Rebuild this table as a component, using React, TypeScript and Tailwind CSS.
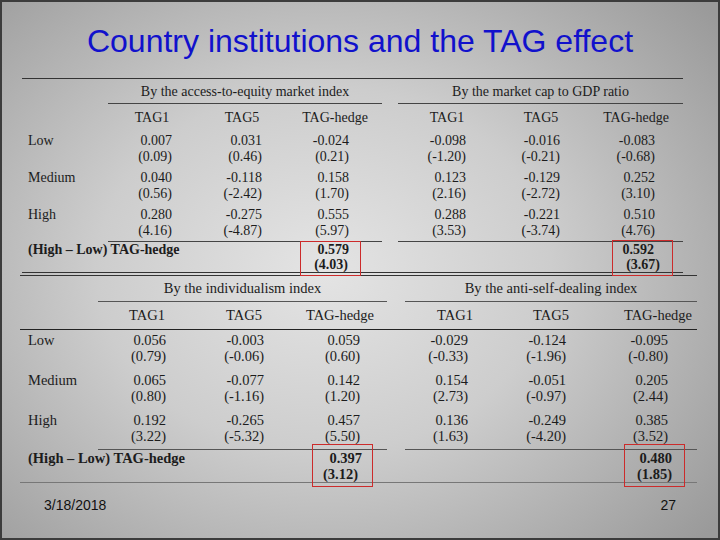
import React from "react";

type Cfg = {
  label: string;
  cols: string[];
  pr: string[];
  labelPad: string;
};

type Val = [string, string, string?, string?] | null;

const T1: Cfg = {
  label: "w-[90px]",
  labelPad: "pl-[6px]",
  cols: ["w-[80px]", "ml-[10px] w-[80px]", "ml-[13px] w-[80px]", "ml-[32px] w-[80px]", "ml-[14px] w-[80px]", "ml-[15px] w-[80px]"],
  pr: ["pr-[20px]", "pr-[20px]", "pr-[26px]", "pr-[21px]", "pr-[21px]", "pr-[21px]"],
};

const T2: Cfg = {
  label: "w-[87px]",
  labelPad: "pl-[8px]",
  cols: ["w-[80px]", "ml-[17px] w-[80px]", "ml-[16px] w-[80px]", "ml-[35px] w-[80px]", "ml-[16px] w-[80px]", "ml-[27px] w-[80px]"],
  pr: ["pr-[21px]", "pr-[20px]", "pr-[20px]", "pr-[27px]", "pr-[25px]", "pr-[30px]"],
};

const heads = ["TAG1", "TAG5", "TAG-hedge", "TAG1", "TAG5", "TAG-hedge"];

function HeadRow({ cfg, h }: { cfg: Cfg; h: string }) {
  return (
    <div className={`flex items-center ${h}`}>
      <div className={`${cfg.label} shrink-0`} />
      {heads.map((t, i) => (
        <div key={i} className={`${cfg.cols[i]} shrink-0 text-center whitespace-nowrap`}>
          {t}
        </div>
      ))}
    </div>
  );
}

function DataRow({
  cfg,
  label,
  vals,
  h,
  bold,
  lead,
}: {
  cfg: Cfg;
  label: string;
  vals: Val[];
  h: string;
  bold?: boolean;
  lead: string;
}) {
  return (
    <div className={`flex ${h} ${lead} ${bold ? "font-bold" : ""}`}>
      <div className={`${cfg.label} ${cfg.labelPad} shrink-0 whitespace-nowrap`}>{label}</div>
      {vals.map((v, i) => (
        <div key={i} className={`${cfg.cols[i]} ${cfg.pr[i]} shrink-0 text-right whitespace-nowrap`}>
          {v ? (
            <>
              <div className={v[2] ?? ""}>{v[0]}</div>
              <div className={v[3] ?? ""}>{v[1]}</div>
            </>
          ) : null}
        </div>
      ))}
    </div>
  );
}

export default function App() {
  return (
    <div className="relative w-[720px] h-[540px] overflow-hidden bg-[radial-gradient(ellipse_70%_75%_at_45%_50%,#e4e4e4_0%,#cdcdcd_45%,#9a9a9a_100%)] shadow-[inset_0_0_0_2px_#3c3c3c]">
      {/* Title */}
      <div className="h-[78px] pt-[23px] text-center font-['Liberation_Sans',Arial,sans-serif] text-[32px] leading-[36px] text-[#1111cc]">
        Country institutions and the TAG effect
      </div>

      <div className="font-['Liberation_Serif','Times_New_Roman',serif] text-[#1c1c1c]">
        {/* Table 1 */}
        <div className="ml-[22px] w-[661px] text-[14px]">
          <div className="h-px bg-[#333]" />
          <div className="flex h-[25px]">
            <div className="w-[86px] shrink-0" />
            <div className="w-[274px] shrink-0 border-b border-[#444] flex items-center justify-center whitespace-nowrap">
              By the access-to-equity market index
            </div>
            <div className="ml-[16px] w-[285px] shrink-0 border-b border-[#444] flex items-center justify-center whitespace-nowrap">
              By the market cap to GDP ratio
            </div>
          </div>
          <HeadRow cfg={T1} h="h-[26px]" />
          <DataRow cfg={T1} label="Low" h="h-[37px] pt-[3px]" lead="leading-[16px]" vals={[["0.007", "(0.09)"], ["0.031", "(0.46)"], ["-0.024", "(0.21)"], ["-0.098", "(-1.20)"], ["-0.016", "(-0.21)"], ["-0.083", "(-0.68)"]]} />
          <DataRow cfg={T1} label="Medium" h="h-[37px] pt-[3px]" lead="leading-[16px]" vals={[["0.040", "(0.56)"], ["-0.118", "(-2.42)"], ["0.158", "(1.70)"], ["0.123", "(2.16)"], ["-0.129", "(-2.72)"], ["0.252", "(3.10)"]]} />
          <DataRow cfg={T1} label="High" h="h-[37px] pt-[3px]" lead="leading-[16px]" vals={[["0.280", "(4.16)"], ["-0.275", "(-4.87)"], ["0.555", "(5.97)"], ["0.288", "(3.53)"], ["-0.221", "(-3.74)"], ["0.510", "(4.76)"]]} />
          <div className="flex h-px">
            <div className="w-[86px] shrink-0" />
            <div className="w-[274px] shrink-0 bg-[#444]" />
            <div className="ml-[16px] w-[285px] shrink-0 bg-[#444]" />
          </div>
          <DataRow cfg={T1} label="(High – Low) TAG-hedge" bold h="h-[30px]" lead="leading-[15px]" vals={[null, null, ["0.579", "(4.03)", "", "mr-[1px]"], null, null, ["0.592", "(3.67)", "mr-[1px]", "mr-[-5px]"]]} />
          <div className="h-px bg-[#333]" />
        </div>
        <div className="h-[2px]" />

        {/* Table 2 */}
        <div className="ml-[20px] w-[677px] text-[14.5px]">
          <div className="h-px bg-[#333]" />
          <div className="flex h-[26px]">
            <div className="w-[78px] shrink-0" />
            <div className="w-[289px] shrink-0 border-b border-[#555] flex items-center justify-center whitespace-nowrap">
              By the individualism index
            </div>
            <div className="ml-[18px] w-[292px] shrink-0 border-b border-[#555] flex items-center justify-center whitespace-nowrap">
              By the anti-self-dealing index
            </div>
          </div>
          <HeadRow cfg={T2} h="h-[27px]" />
          <div className="h-px bg-[#222]" />
          <DataRow cfg={T2} label="Low" h="h-[39px] pt-[2px]" lead="leading-[16px]" vals={[["0.056", "(0.79)"], ["-0.003", "(-0.06)"], ["0.059", "(0.60)"], ["-0.029", "(-0.33)"], ["-0.124", "(-1.96)"], ["-0.095", "(-0.80)"]]} />
          <DataRow cfg={T2} label="Medium" h="h-[40px] pt-[3px]" lead="leading-[16px]" vals={[["0.065", "(0.80)"], ["-0.077", "(-1.16)"], ["0.142", "(1.20)"], ["0.154", "(2.73)"], ["-0.051", "(-0.97)"], ["0.205", "(2.44)"]]} />
          <DataRow cfg={T2} label="High" h="h-[40px] pt-[3px]" lead="leading-[16px]" vals={[["0.192", "(3.22)"], ["-0.265", "(-5.32)"], ["0.457", "(5.50)"], ["0.136", "(1.63)"], ["-0.249", "(-4.20)"], ["0.385", "(3.52)"]]} />
          <div className="flex h-px">
            <div className="w-[78px] shrink-0" />
            <div className="w-[289px] shrink-0 bg-[#555]" />
            <div className="ml-[18px] w-[292px] shrink-0 bg-[#555]" />
          </div>
          <DataRow cfg={T2} label="(High – Low) TAG-hedge" bold h="h-[32px]" lead="leading-[16px]" vals={[null, null, ["0.397", "(3.12)", "mr-[-2px]", "mr-[2px]"], null, null, ["0.480", "(1.85)", "mr-[-4px]", "mr-[-4px]"]]} />
          <div className="h-px bg-[#777]" />
        </div>
      </div>

      {/* Footer */}
      <div className="mt-[13px] flex justify-between pl-[44px] pr-[44px] font-['Liberation_Sans',Arial,sans-serif] text-[14px] leading-[18px] text-[#111]">
        <span>3/18/2018</span>
        <span>27</span>
      </div>

      {/* Red highlight boxes */}
      <div className="absolute left-[300px] top-[241px] w-[61px] h-[35px] border-[1.5px] border-[#cc2b2b]" />
      <div className="absolute left-[612px] top-[240px] w-[61px] h-[36px] border-[1.5px] border-[#cc2b2b]" />
      <div className="absolute left-[312px] top-[444px] w-[61px] h-[43px] border-[1.5px] border-[#cc2b2b]" />
      <div className="absolute left-[624px] top-[444px] w-[61px] h-[43px] border-[1.5px] border-[#cc2b2b]" />
    </div>
  );
}
